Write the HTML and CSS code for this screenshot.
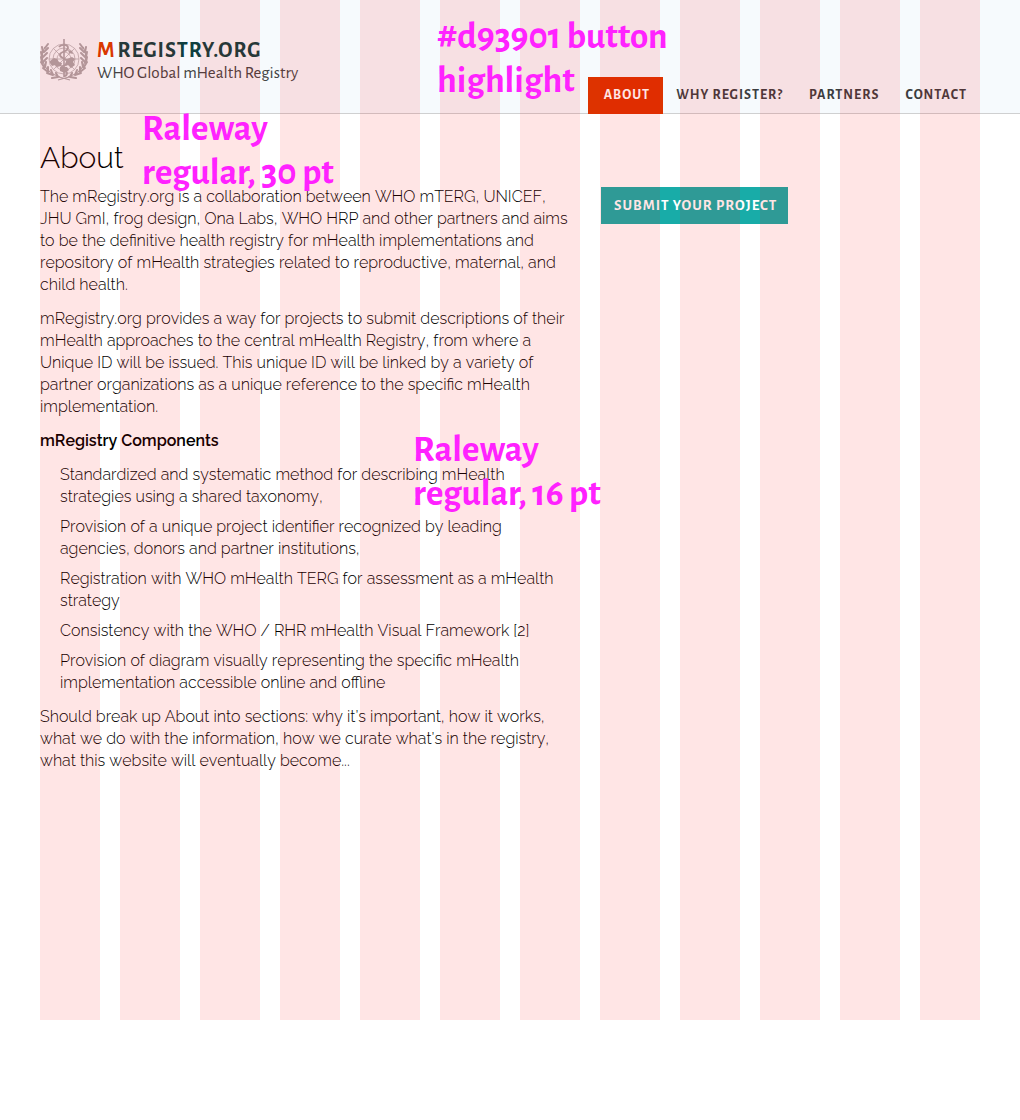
FILE: index.html
```html
<!DOCTYPE html>
<html lang="en">
<head>
<meta charset="utf-8">
<meta name="viewport" content="width=device-width, initial-scale=1">
<title>About - mRegistry.org</title>
<link rel="stylesheet" href="styles.css">
</head>
<body>
<div class="page">
  <header class="site-header">
    <a class="brand" href="#">
      <svg class="emblem" viewBox="0 0 48 42" fill="none" stroke="currentColor" aria-hidden="true">
        <g stroke-width=".7">
          <circle cx="24" cy="20" r="15"/>
          <circle cx="24" cy="20" r="11"/>
          <circle cx="24" cy="20" r="7"/>
          <path d="M9 20h30M13.500 9.500l21 21M34.500 9.500l-21 21"/>
        </g>
        <g fill="currentColor" stroke="none">
          <path d="M10 22l4-3 3 1 2 3 3 1-1 3-4 1-2-2-3 1-2-3zM27 20l5-2 3 2-2 3 2 3-4 3-3-3-3-1zM28 11l4 1 1 3-4-1zM20 28l7 0 2 3-4 3-5-2z"/>
        </g>
        <path stroke-width="1.600" d="M24 0v38"/>
        <path stroke-width="1.800" d="M19 8c2-3 9-3 9 1s-8 3-8 7 8 3 8 7-7 3-7 6 6 2 6 5-3 3-3 3"/>
        <g id="wreath">
          <path stroke-width="1.200" d="M5 8C-1 18 3 33 20 38"/>
          <path stroke-width="2" stroke-linecap="round" d="M5 9l3-4M3 13l-1-5M4 13l4-4M2 18l-1-5M3 18l4-4M2 23l-1-5M3 23l4-4M4 28l-3-5M5 28l1-5M8 33l-5-4M8 33l0-5M13 36l-6-2M13 36l-2-5M18 38l-6 1M18 38l-2-4"/>
        </g>
        <use href="#wreath" transform="matrix(-1 0 0 1 48 0)"/>
        <path stroke-width="1.200" d="M19 38l11 3M29 38l-11 3"/>
      </svg>
      <span class="brand-text">
        <span class="brand-name"><span class="brand-initial">M</span>REGISTRY.ORG</span>
        <span class="brand-tagline">WHO Global mHealth Registry</span>
      </span>
    </a>
    <nav class="site-nav" aria-label="Main">
      <a class="nav-link nav-link-active" href="#" aria-current="page">ABOUT</a>
      <a class="nav-link" href="#">WHY REGISTER?</a>
      <a class="nav-link" href="#">PARTNERS</a>
      <a class="nav-link" href="#">CONTACT</a>
    </nav>
  </header>

  <main class="content">
    <h1 class="title">About</h1>
    <article class="article">
      <p>The mRegistry.org is a collaboration between WHO mTERG, UNICEF,<br>
      JHU GmI, frog design, Ona Labs, WHO HRP and other partners and aims<br>
      to be the definitive health registry for mHealth implementations and<br>
      repository of mHealth strategies related to reproductive, maternal, and<br>
      child health.</p>
      <p>mRegistry.org provides a way for projects to submit descriptions of their<br>
      mHealth approaches to the central mHealth Registry, from where a<br>
      Unique ID will be issued. This unique ID will be linked by a variety of<br>
      partner organizations as a unique reference to the specific mHealth<br>
      implementation.</p>
      <h2 class="subtitle">mRegistry Components</h2>
      <ul class="components">
        <li>Standardized and systematic method for describing mHealth<br>strategies using a shared taxonomy,</li>
        <li>Provision of a unique project identifier recognized by leading<br>agencies, donors and partner institutions,</li>
        <li>Registration with WHO mHealth TERG for assessment as a mHealth<br>strategy</li>
        <li>Consistency with the WHO / RHR mHealth Visual Framework [2]</li>
        <li>Provision of diagram visually representing the specific mHealth<br>implementation accessible online and offline</li>
      </ul>
      <p>Should break up About into sections: why it’s important, how it works,<br>
      what we do with the information, how we curate what’s in the registry,<br>
      what this website will eventually become...</p>
    </article>
    <aside class="actions">
      <button class="submit" type="button">SUBMIT YOUR PROJECT</button>
    </aside>
  </main>

  <div class="columns" aria-hidden="true">
    <i></i><i></i><i></i><i></i><i></i><i></i><i></i><i></i><i></i><i></i><i></i><i></i>
  </div>
  <p class="note note-highlight">#d93901 button<br>highlight</p>
  <p class="note note-title">Raleway<br>regular, 30 pt</p>
  <p class="note note-body">Raleway<br>regular, 16 pt</p>
</div>
</body>
</html>
```
FILE: styles.css
```css
* {
  box-sizing: border-box;
}

body {
  margin: 0;
  background: #fff;
  color: #000;
  font: 300 16px/22px Raleway, Lato, sans-serif;
  font-kerning: none;
}

.page {
  position: relative;
  min-height: calc(100vh - 100px);
}

/* Header */
.site-header {
  display: flex;
  justify-content: space-between;
  align-items: flex-end;
  height: 114px;
  padding: 0 40px;
  background: linear-gradient(#f6fafd 113px, #cfd0d1 113px);
}

.brand {
  display: flex;
  align-self: flex-start;
  gap: 9px;
  padding-top: 38px;
  color: #444;
  text-decoration: none;
}

.emblem {
  width: 48px;
  height: 44px;
  color: #aba6aa;
}

.brand-text {
  display: flex;
  flex-direction: column;
}

.brand-name {
  color: #0e3f40;
  font: 600 22px/24px "Alegreya Sans", Lato, sans-serif;
  letter-spacing: 1px;
}

.brand-initial {
  margin-right: 2px;
  color: #d93901;
}

.brand-tagline {
  font: 400 17px/22px "Alegreya Sans", Lato, sans-serif;
}

.site-nav {
  display: flex;
}

.nav-link {
  padding: 0 13px;
  color: #3b3d40;
  font: 600 14px/37px "Alegreya Sans", Lato, sans-serif;
  letter-spacing: 1px;
  text-decoration: none;
  white-space: nowrap;
}

.nav-link-active {
  padding-left: 16px;
  background: #dd3300;
  color: #fff;
}

/* Content */
.content {
  display: grid;
  grid-template-columns: repeat(12, 1fr);
  column-gap: 20px;
  padding: 26px 40px 0;
}

.title {
  grid-column: 1 / -1;
  margin: 0 0 10px;
  font-size: 30px;
  font-weight: 300;
  line-height: 36px;
}

.article {
  grid-column: 1 / span 7;
  white-space: nowrap;
}

.article p {
  margin: 0 0 12px;
}

.subtitle {
  margin: 0 0 12px;
  font-size: 16px;
  font-weight: 600;
  line-height: 22px;
}

.components {
  display: grid;
  gap: 8px;
  margin: 0 0 12px;
  padding: 0 0 0 20px;
  list-style: none;
}

.actions {
  grid-column: 8 / -1;
  padding: 1px;
}

.submit {
  height: 37px;
  padding: 0 11px 0 13px;
  border: 0;
  background: #18aca8;
  color: #fff;
  font: 600 15px/37px "Alegreya Sans", Lato, sans-serif;
  letter-spacing: 1px;
}

/* Twelve-column guide laid over the page */
.columns {
  position: absolute;
  inset: 0;
  display: grid;
  grid-template-columns: repeat(12, 1fr);
  column-gap: 20px;
  padding: 0 40px;
  pointer-events: none;
}

.columns i {
  background: rgba(255, 0, 0, .1);
}

/* Designer's notes */
.note {
  position: absolute;
  margin: 0;
  color: #ff22ff;
  font: 700 37px/44px "Alegreya Sans", "Open Sans", sans-serif;
  font-feature-settings: "onum";
  white-space: nowrap;
}

.note-highlight {
  top: 15px;
  left: 437px;
}

.note-title {
  top: 107px;
  left: 142px;
}

.note-body {
  top: 428px;
  left: 413px;
}
```
